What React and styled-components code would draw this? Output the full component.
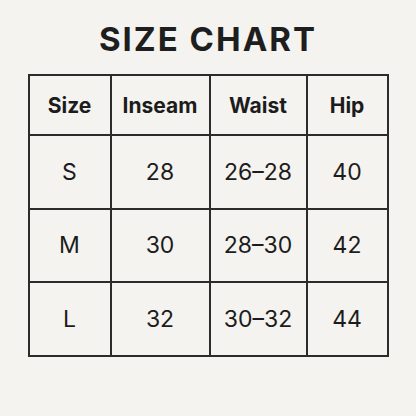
import React from 'react';
import styled, { createGlobalStyle } from 'styled-components';

const Global = createGlobalStyle`
  html, body {
    margin: 0;
    background: #f4f3ef;
  }
`;

const Page = styled.div`
  width: 416px;
  height: 416px;
  display: flex;
  flex-direction: column;
  align-items: center;
  font-family: Inter, "Liberation Sans", sans-serif;
  color: #1c1c1c;
`;

const Title = styled.h1`
  margin: 21px 0 0;
  font-size: 33px;
  line-height: 36px;
  font-weight: 700;
  letter-spacing: 2px;
  color: #1e1e1e;
`;

const Table = styled.table`
  margin-top: 17px;
  border-collapse: collapse;
  border: 2px solid #2b2b2b;
  table-layout: fixed;
`;

const Th = styled.th`
  width: ${p => p.w}px;
  height: 58px;
  border: 2px solid #2b2b2b;
  font-size: 21px;
  font-weight: 700;
  text-align: center;
  padding: 0;
`;

const Td = styled.td`
  height: 71.5px;
  border: 2px solid #2b2b2b;
  font-size: 23px;
  font-weight: 400;
  text-align: center;
  padding: 0;
`;

const cols = [
  { label: 'Size', w: 80 },
  { label: 'Inseam', w: 97 },
  { label: 'Waist', w: 95 },
  { label: 'Hip', w: 79 },
];

const rows = [
  ['S', '28', '26–28', '40'],
  ['M', '30', '28–30', '42'],
  ['L', '32', '30–32', '44'],
];

const App = () => {
  return (
    <Page>
      <Global />
      <Title>SIZE CHART</Title>
      <Table>
        <thead>
          <tr>
            {cols.map(c => <Th key={c.label} w={c.w}>{c.label}</Th>)}
          </tr>
        </thead>
        <tbody>
          {rows.map(r => (
            <tr key={r[0]}>
              {r.map((v, i) => <Td key={i}>{v}</Td>)}
            </tr>
          ))}
        </tbody>
      </Table>
    </Page>
  );
};

export default App;
